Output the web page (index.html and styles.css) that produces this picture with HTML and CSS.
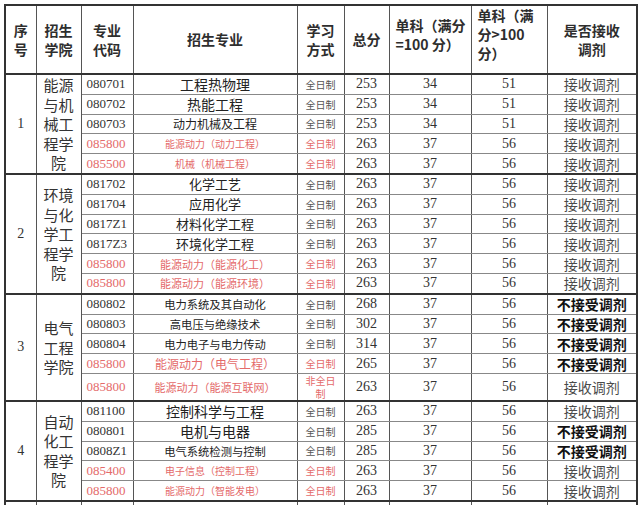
FILE: index.html
```html
<!DOCTYPE html>
<html lang="zh">
<head>
<meta charset="utf-8">
<link rel="stylesheet" href="styles.css">
</head>
<body>
<div class="wrap">
<table class="tbl">
  <colgroup>
    <col class="c1"><col class="c2"><col class="c3"><col class="c4"><col class="c5"><col class="c6"><col class="c7"><col class="c8"><col class="c9">
  </colgroup>
  <thead>
    <tr class="head">
      <th class="narrow">序<br>号</th>
      <th class="narrow"><span class="two">招生学院</span></th>
      <th><span class="two">专业代码</span></th>
      <th>招生专业</th>
      <th class="narrow"><span class="two">学习方式</span></th>
      <th>总分</th>
      <th class="left up">单科（满分<br>=100 分）</th>
      <th class="left up">单科（满<br>分&gt;100<br>分）</th>
      <th>是否接收<br>调剂</th>
    </tr>
  </thead>
  <tbody>
    <tr class="grp">
      <td rowspan="5" class="no">1</td>
      <td rowspan="5" class="college"><span class="two">能源与机械工程学院</span></td>
      <td class="code">080701</td><td class="major f14">工程热物理</td><td class="mode">全日制</td><td class="num">253</td><td class="num">34</td><td class="num">51</td><td class="ok">接收调剂</td>
    </tr>
    <tr><td class="code">080702</td><td class="major f14">热能工程</td><td class="mode">全日制</td><td class="num">253</td><td class="num">34</td><td class="num">51</td><td class="ok">接收调剂</td></tr>
    <tr><td class="code">080703</td><td class="major f12">动力机械及工程</td><td class="mode">全日制</td><td class="num">253</td><td class="num">34</td><td class="num">51</td><td class="ok">接收调剂</td></tr>
    <tr class="red"><td class="code">085800</td><td class="major f10">能源动力（动力工程）</td><td class="mode">全日制</td><td class="num">263</td><td class="num">37</td><td class="num">56</td><td class="ok">接收调剂</td></tr>
    <tr class="red"><td class="code">085500</td><td class="major f10">机械（机械工程）</td><td class="mode">全日制</td><td class="num">263</td><td class="num">37</td><td class="num">56</td><td class="ok">接收调剂</td></tr>

    <tr class="grp">
      <td rowspan="6" class="no">2</td>
      <td rowspan="6" class="college"><span class="two">环境与化学工程学院</span></td>
      <td class="code">081702</td><td class="major f13">化学工艺</td><td class="mode">全日制</td><td class="num">263</td><td class="num">37</td><td class="num">56</td><td class="ok">接收调剂</td>
    </tr>
    <tr><td class="code">081704</td><td class="major f13">应用化学</td><td class="mode">全日制</td><td class="num">263</td><td class="num">37</td><td class="num">56</td><td class="ok">接收调剂</td></tr>
    <tr><td class="code">0817Z1</td><td class="major f13">材料化学工程</td><td class="mode">全日制</td><td class="num">263</td><td class="num">37</td><td class="num">56</td><td class="ok">接收调剂</td></tr>
    <tr><td class="code">0817Z3</td><td class="major f13">环境化学工程</td><td class="mode">全日制</td><td class="num">263</td><td class="num">37</td><td class="num">56</td><td class="ok">接收调剂</td></tr>
    <tr class="red"><td class="code">085800</td><td class="major f11">能源动力（能源化工）</td><td class="mode">全日制</td><td class="num">263</td><td class="num">37</td><td class="num">56</td><td class="ok">接收调剂</td></tr>
    <tr class="red"><td class="code">085800</td><td class="major f11">能源动力（能源环境）</td><td class="mode">全日制</td><td class="num">263</td><td class="num">37</td><td class="num">56</td><td class="ok">接收调剂</td></tr>

    <tr class="grp">
      <td rowspan="5" class="no">3</td>
      <td rowspan="5" class="college"><span class="two">电气工程学院</span></td>
      <td class="code">080802</td><td class="major f115">电力系统及其自动化</td><td class="mode">全日制</td><td class="num">268</td><td class="num">37</td><td class="num">56</td><td class="no-ok">不接受调剂</td>
    </tr>
    <tr><td class="code">080803</td><td class="major f115">高电压与绝缘技术</td><td class="mode">全日制</td><td class="num">302</td><td class="num">37</td><td class="num">56</td><td class="no-ok">不接受调剂</td></tr>
    <tr><td class="code">080804</td><td class="major f115">电力电子与电力传动</td><td class="mode">全日制</td><td class="num">314</td><td class="num">37</td><td class="num">56</td><td class="no-ok">不接受调剂</td></tr>
    <tr class="red"><td class="code">085800</td><td class="major f12">能源动力（电气工程）</td><td class="mode">全日制</td><td class="num">265</td><td class="num">37</td><td class="num">56</td><td class="no-ok">不接受调剂</td></tr>
    <tr class="red tall"><td class="code">085800</td><td class="major f11">能源动力（能源互联网）</td><td class="mode">非全日制</td><td class="num">263</td><td class="num">37</td><td class="num">56</td><td class="ok">接收调剂</td></tr>

    <tr class="grp">
      <td rowspan="5" class="no">4</td>
      <td rowspan="5" class="college"><span class="two">自动化工程学院</span></td>
      <td class="code">081100</td><td class="major f14">控制科学与工程</td><td class="mode">全日制</td><td class="num">263</td><td class="num">37</td><td class="num">56</td><td class="ok">接收调剂</td>
    </tr>
    <tr><td class="code">080801</td><td class="major f14">电机与电器</td><td class="mode">全日制</td><td class="num">285</td><td class="num">37</td><td class="num">56</td><td class="no-ok">不接受调剂</td></tr>
    <tr><td class="code">0808Z1</td><td class="major f115">电气系统检测与控制</td><td class="mode">全日制</td><td class="num">285</td><td class="num">37</td><td class="num">56</td><td class="no-ok">不接受调剂</td></tr>
    <tr class="red"><td class="code">085400</td><td class="major f10">电子信息（控制工程）</td><td class="mode">全日制</td><td class="num">263</td><td class="num">37</td><td class="num">56</td><td class="ok">接收调剂</td></tr>
    <tr class="red"><td class="code">085800</td><td class="major f10">能源动力（智能发电）</td><td class="mode">全日制</td><td class="num">263</td><td class="num">37</td><td class="num">56</td><td class="ok">接收调剂</td></tr>

    <tr class="grp"><td></td><td></td><td></td><td></td><td></td><td></td><td></td><td></td><td></td></tr>
  </tbody>
</table>
</div>
</body>
</html>
```
FILE: styles.css
```css
html, body {
  margin: 0;
  padding: 0;
  background: #fff;
}
.wrap {
  padding: 4px 0 0 4px;
  width: 632px;
}
.tbl {
  border-collapse: collapse;
  table-layout: fixed;
  width: 632px;
  border: 2px solid #333;
  font-family: "Liberation Serif", "Noto Sans CJK SC", serif;
  color: #333;
}
.c1 { width: 31px; }
.c2 { width: 45px; }
.c3 { width: 52px; }
.c4 { width: 164px; }
.c5 { width: 47px; }
.c6 { width: 45px; }
.c7 { width: 82px; }
.c8 { width: 76px; }
.c9 { width: 90px; }

.tbl th, .tbl td {
  border: 1px solid #888;
  padding: 0 5px;
  text-align: center;
  vertical-align: middle;
  overflow: hidden;
  white-space: nowrap;
}
.tbl th {
  font-family: "Noto Sans CJK SC", sans-serif;
  font-weight: 700;
  font-size: 14px;
  line-height: 19px;
  color: #2e2e2e;
  border-left-color: #555;
  border-right-color: #555;
  border-bottom: 2px solid #333;
  white-space: normal;
}
.tbl th.narrow { padding: 0; }
.head { height: 69px; }
.tbl th.left { text-align: left; padding-left: 6px; }
.tbl th.up { padding-bottom: 10px; }
.two {
  display: inline-block;
  width: 2em;
  white-space: normal;
  word-break: break-all;
}

.tbl td {
  height: 18.8px;
  line-height: 18px;
  border-left-color: #555;
  border-right-color: #555;
}
.tbl tr.grp td { border-top: 2px solid #333; }
.tbl tr.tall td { height: 24px; }

.no {
  font-size: 14px;
  color: #333;
}
.tbl td.college {
  font-family: "Noto Sans CJK SC", sans-serif;
  font-size: 15px;
  line-height: 19.5px;
  color: #333;
  white-space: normal;
  padding: 0 2px;
}
.tbl td.code {
  text-align: left;
  font-size: 13px;
  padding-left: 5px;
  color: #333;
}
.major {
  font-family: "Noto Sans CJK SC", sans-serif;
  color: #222;
}
.f14 { font-size: 14px; }
.f13 { font-size: 13px; }
.f12 { font-size: 12px; }
.f115 { font-size: 11.3px; }
.f11 { font-size: 11px; }
.f10 { font-size: 10px; }
.tbl td.mode {
  font-family: "Noto Sans CJK SC", sans-serif;
  font-size: 10px;
  color: #555;
  white-space: normal;
  line-height: 13px;
}
.num {
  font-size: 14px;
  color: #333;
}
.ok {
  font-family: "Noto Sans CJK SC", sans-serif;
  font-size: 14px;
  color: #4a4a4a;
}
.no-ok {
  font-family: "Noto Sans CJK SC", sans-serif;
  font-size: 14px;
  font-weight: 700;
  color: #111;
}
.tbl tr.red td.code,
.tbl tr.red td.major,
.tbl tr.red td.mode {
  color: #e46a6a;
}
```
